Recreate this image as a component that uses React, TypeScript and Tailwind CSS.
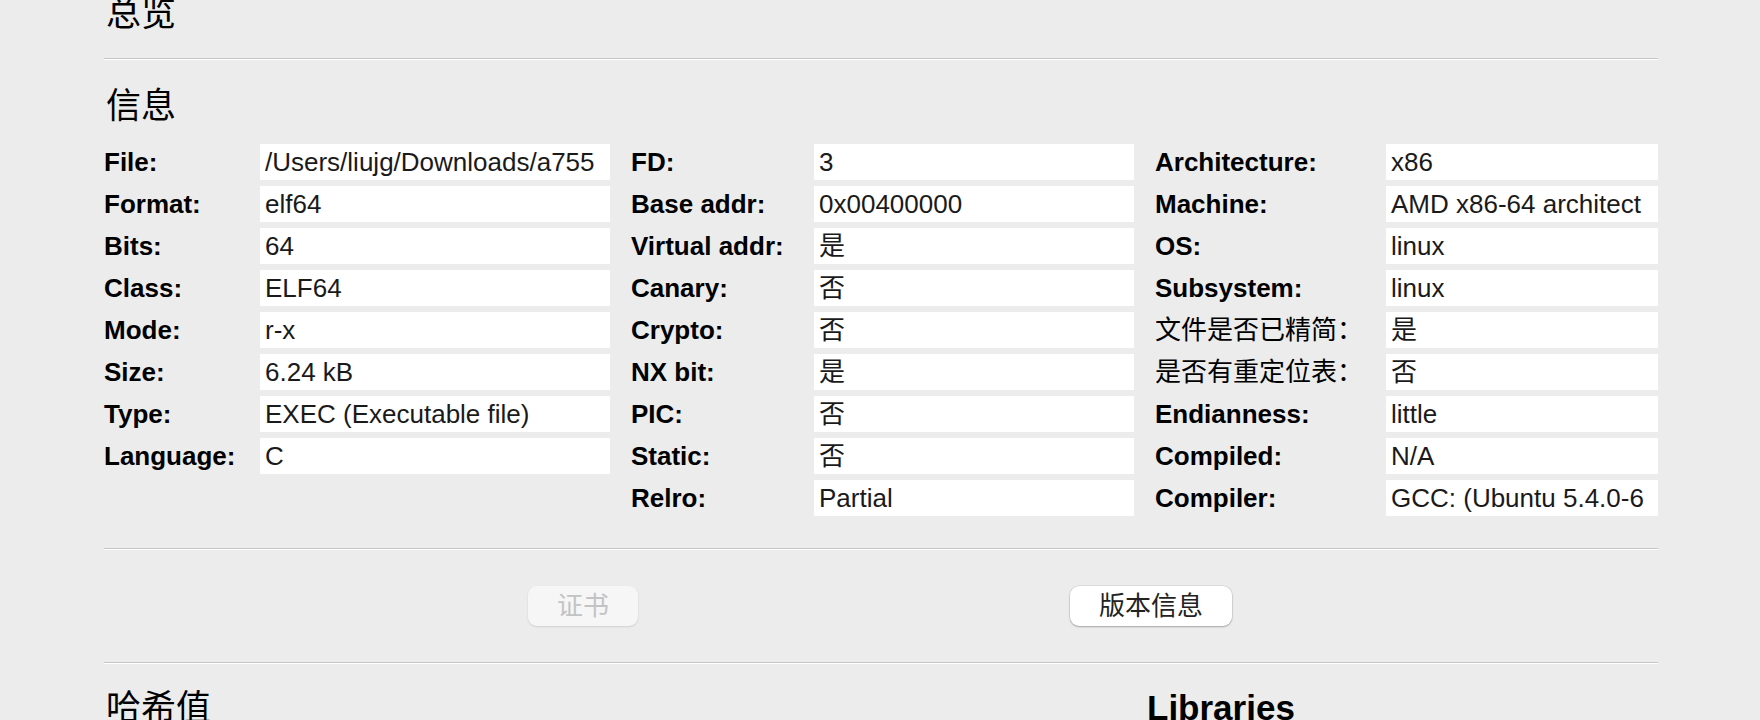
import React from "react";

type Row = { label: string; value: string; cjk?: boolean };

const col1: Row[] = [
  { label: "File:", value: "/Users/liujg/Downloads/a755" },
  { label: "Format:", value: "elf64" },
  { label: "Bits:", value: "64" },
  { label: "Class:", value: "ELF64" },
  { label: "Mode:", value: "r-x" },
  { label: "Size:", value: "6.24 kB" },
  { label: "Type:", value: "EXEC (Executable file)" },
  { label: "Language:", value: "C" },
];

const col2: Row[] = [
  { label: "FD:", value: "3" },
  { label: "Base addr:", value: "0x00400000" },
  { label: "Virtual addr:", value: "是" },
  { label: "Canary:", value: "否" },
  { label: "Crypto:", value: "否" },
  { label: "NX bit:", value: "是" },
  { label: "PIC:", value: "否" },
  { label: "Static:", value: "否" },
  { label: "Relro:", value: "Partial" },
];

const col3: Row[] = [
  { label: "Architecture:", value: "x86" },
  { label: "Machine:", value: "AMD x86-64 architect" },
  { label: "OS:", value: "linux" },
  { label: "Subsystem:", value: "linux" },
  { label: "文件是否已精简：", value: "是", cjk: true },
  { label: "是否有重定位表：", value: "否", cjk: true },
  { label: "Endianness:", value: "little" },
  { label: "Compiled:", value: "N/A" },
  { label: "Compiler:", value: "GCC: (Ubuntu 5.4.0-6" },
];

function Separator() {
  return (
    <div>
      <div className="h-px bg-[#c6c6c6]" />
      <div className="h-px bg-white" />
    </div>
  );
}

function InfoColumn({ rows, labelWidth, boxWidth }: { rows: Row[]; labelWidth: string; boxWidth: string }) {
  return (
    <div className="flex flex-col gap-[6px]">
      {rows.map((row) => (
        <div key={row.label} className="flex h-[36px] items-center">
          <div className={`${labelWidth} shrink-0 whitespace-nowrap ${row.cjk ? "font-normal" : "font-bold"} text-black`}>
            {row.label}
          </div>
          <div className={`${boxWidth} h-[36px] shrink-0 overflow-hidden whitespace-nowrap bg-white pl-[5px] text-[#1a1a1a]`}>
            {row.value}
          </div>
        </div>
      ))}
    </div>
  );
}

export default function App() {
  return (
    <div
      className="h-[720px] w-full overflow-hidden bg-[#ececec] text-[26px] leading-[36px]"
      style={{ fontFamily: '"Liberation Sans", "Noto Sans CJK SC", sans-serif' }}
    >
      <div className="w-[1554px] ml-[104px]">
        <h1 className="-mt-[6px] pl-[2px] text-[35px] leading-[40px] font-normal text-black">总览</h1>
        <div className="mt-[24px]">
          <Separator />
        </div>

        <h2 className="mt-[26px] pl-[2px] text-[35px] leading-[40px] font-normal text-black">信息</h2>

        <div className="mt-[18px] flex gap-[21px] items-start">
          <InfoColumn rows={col1} labelWidth="w-[156px]" boxWidth="w-[350px]" />
          <InfoColumn rows={col2} labelWidth="w-[183px]" boxWidth="w-[320px]" />
          <InfoColumn rows={col3} labelWidth="w-[231px]" boxWidth="w-[272px]" />
        </div>

        <div className="mt-[32px]">
          <Separator />
        </div>

        <div className="mt-[36px] flex gap-[432px] pl-[424px]">
          <button
            disabled
            className="h-[40px] w-[110px] rounded-[9px] bg-[#f6f6f6] text-[26px] leading-[40px] text-[#c3c3c3] shadow-[0_1px_2px_rgba(0,0,0,0.12)]"
          >
            证书
          </button>
          <button className="h-[40px] w-[162px] rounded-[9px] bg-white text-[26px] leading-[40px] text-[#222222] shadow-[0_0_0_0.5px_rgba(0,0,0,0.12),0_1px_2px_rgba(0,0,0,0.25)]">
            版本信息
          </button>
        </div>

        <div className="mt-[36px]">
          <Separator />
        </div>

        <div className="mt-[24px] flex items-baseline">
          <div className="w-[1043px] pl-[2px] text-[35px] leading-[40px] font-normal text-black">哈希值</div>
          <div className="text-[35px] leading-[40px] font-bold text-black">Libraries</div>
        </div>
      </div>
    </div>
  );
}
